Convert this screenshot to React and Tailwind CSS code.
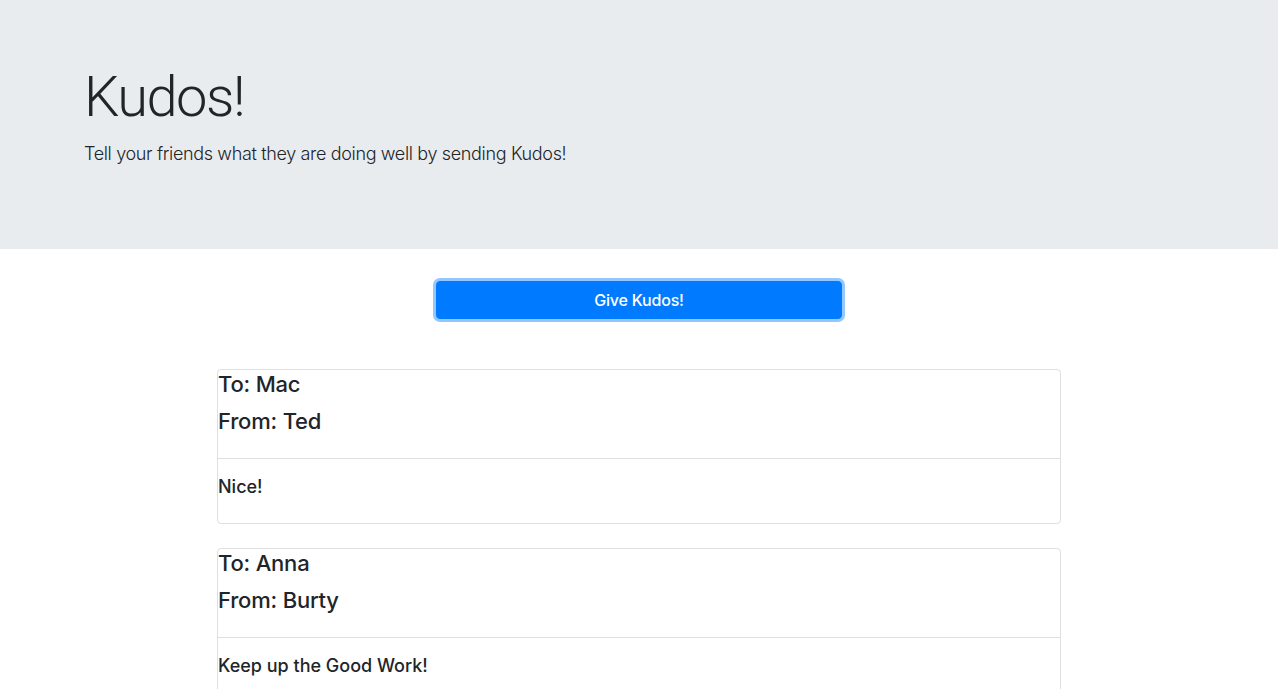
export default function App() {
  const kudos = [
    { to: "Mac", from: "Ted", msg: "Nice!" },
    { to: "Anna", from: "Burty", msg: "Keep up the Good Work!" },
  ];
  return (
    <div className="min-h-screen bg-white text-[#212529]" style={{ fontFamily: "Inter, 'Liberation Sans', sans-serif" }}>
      <div className="bg-[#e9ecef] h-[249px] pt-[64px] mb-[32px]">
        <div className="pl-[84px]">
          <h1 className="text-[56px] leading-[67px] font-light mb-[8px] tracking-[-1.5px]" style={{ fontFamily: "Roboto, sans-serif" }}>Kudos!</h1>
          <p className="text-[18px] leading-[30px] font-light tracking-[-0.35px]">Tell your friends what they are doing well by sending Kudos!</p>
        </div>
      </div>
      <div className="flex flex-col items-center">
        <button className="w-[406px] h-[38px] rounded-[4px] bg-[#007bff] border border-[#007bff] text-white text-[16px] font-medium tracking-[-0.2px] shadow-[0_0_0_3px_rgba(38,143,255,0.5)]">
          Give Kudos!
        </button>
        <div className="mt-[50px] flex flex-col gap-[24px] w-[844px]">
          {kudos.map((k, i) => (
            <div key={i} className="border border-[rgba(0,0,0,0.125)] rounded-[4px]">
              <div className="pb-[22px] border-b border-[rgba(0,0,0,0.125)]">
                <h4 className="text-[22px] leading-[29px] font-medium mb-[8px] tracking-[-0.2px]">To: {k.to}</h4>
                <h4 className="text-[22px] leading-[29px] font-medium tracking-[-0.2px]">From: {k.from}</h4>
              </div>
              <div className="pt-[14px] h-[64px]">
                <p className="text-[18px] leading-[27px] font-medium">{k.msg}</p>
              </div>
            </div>
          ))}
        </div>
      </div>
    </div>
  );
}
